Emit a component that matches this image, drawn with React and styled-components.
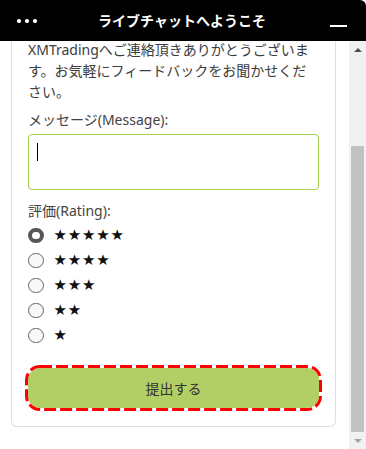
import React from "react";
import styled, { createGlobalStyle } from "styled-components";

const Global = createGlobalStyle`
  html, body { margin: 0; padding: 0; background: #fff; }
  body { font-family: "Noto Sans", "Noto Sans CJK JP", sans-serif; }
  * { box-sizing: border-box; }
`;

const Window = styled.div`
  width: 366px;
  height: 449px;
  display: flex;
  flex-direction: column;
  overflow: hidden;
  background: #fff;
`;

const Header = styled.header`
  height: 41px;
  flex: none;
  background: #000;
  border-top-right-radius: 6px;
  display: grid;
  grid-template-columns: 1fr auto 1fr;
  align-items: center;
  padding: 0 19px 0 17px;
  color: #fff;
`;

const Dots = styled.div`
  display: flex;
  gap: 4.5px;
  align-items: center;
  padding-top: 1px;
`;

const Dot = styled.span`
  width: 3.5px;
  height: 3.5px;
  border-radius: 50%;
  background: #fff;
`;

const Title = styled.h1`
  margin: 0;
  font-size: 14px;
  font-weight: 700;
  font-family: "Noto Sans CJK JP", sans-serif;
  line-height: 20px;
  margin-top: -1px;
`;

const Minimize = styled.button`
  justify-self: end;
  width: 17px;
  height: 2px;
  padding: 0;
  border: none;
  background: #fff;
  margin-top: 10px;
`;

const Body = styled.div`
  flex: 1;
  display: flex;
  min-height: 0;
`;

const Scroller = styled.div`
  flex: 1;
  overflow: hidden;
  padding: 0 13px 0 11px;
`;

const Card = styled.div`
  background: #fff;
  border: 1px solid #dedede;
  border-top: none;
  border-radius: 0 0 6px 6px;
  padding: 0 16px 18px;
  margin-top: -2px;
  color: #3c3c3c;
  font-size: 14px;
  line-height: 21px;
`;

const Intro = styled.p`
  margin: 0;
`;

const Label = styled.div`
  margin-top: ${(p) => p.$gap}px;
  color: #444;
`;

const MessageBox = styled.div`
  margin-top: 4px;
  height: 56px;
  border: 1px solid #a6ce4c;
  border-radius: 4px;
  padding: 8px 8px;
  background: #fff;
`;

const Caret = styled.span`
  display: block;
  width: 1px;
  height: 18px;
  background: #000;
`;

const RadioList = styled.div`
  margin-top: 2px;
  display: flex;
  flex-direction: column;
`;

const RadioRow = styled.label`
  height: 25px;
  display: flex;
  align-items: center;
  gap: 10px;
`;

const Radio = styled.input.attrs({ type: "radio" })`
  appearance: none;
  margin: 0;
  width: 15.5px;
  height: 15.5px;
  border-radius: 50%;
  border: ${(p) => (p.checked ? "4.5px solid #575757" : "1.5px solid #666")};
  background: ${(p) => (p.checked ? "#fff" : "#f8f8f8")};
  flex: none;
`;

const Stars = styled.span`
  font-family: "DejaVu Sans", sans-serif;
  font-size: 15px;
  letter-spacing: 0.8px;
  color: #111;
  line-height: 1;
`;

const SubmitWrap = styled.div`
  position: relative;
  margin-top: 20px;
`;

const Submit = styled.button`
  display: block;
  width: 100%;
  height: 40px;
  border: none;
  border-radius: 12px;
  background: #b1cf64;
  color: #333;
  font-family: "Noto Sans CJK JP", sans-serif;
  font-size: 14px;
  outline: none;
`;

const FocusRing = styled.svg`
  position: absolute;
  left: 0;
  top: 0;
  width: 100%;
  height: 100%;
  overflow: visible;
  pointer-events: none;
`;

const Scrollbar = styled.div`
  width: 17px;
  flex: none;
  background: #f1f1f1;
  display: flex;
  flex-direction: column;
`;

const ArrowButton = styled.div`
  height: 17px;
  flex: none;
  display: flex;
  align-items: center;
  justify-content: center;
`;

const Arrow = styled.span`
  width: 0;
  height: 0;
  border-left: 4px solid transparent;
  border-right: 4px solid transparent;
  ${(p) =>
    p.$up
      ? `border-bottom: 4px solid ${p.$color};`
      : `border-top: 4px solid ${p.$color};`}
`;

const Track = styled.div`
  flex: 1;
  display: flex;
  flex-direction: column;
  justify-content: flex-end;
  padding: 0 2px;
`;

const Thumb = styled.div`
  background: #c1c1c1;
  height: ${(p) => p.$size}px;
`;

const ratings = [5, 4, 3, 2, 1];

export default function App() {
  return (
    <Window>
      <Global />
      <Header>
        <Dots>
          <Dot />
          <Dot />
          <Dot />
        </Dots>
        <Title>ライブチャットへようこそ</Title>
        <Minimize aria-label="minimize" />
      </Header>
      <Body>
        <Scroller>
          <Card>
            <Intro>
              XMTradingへご連絡頂きありがとうございます。お気軽にフィードバックをお聞かせください。
            </Intro>
            <Label $gap={7}>メッセージ(Message):</Label>
            <MessageBox>
              <Caret />
            </MessageBox>
            <Label $gap={10}>評価(Rating):</Label>
            <RadioList>
              {ratings.map((n) => (
                <RadioRow key={n}>
                  <Radio name="rating" checked={n === 5} readOnly />
                  <Stars>{"★".repeat(n)}</Stars>
                </RadioRow>
              ))}
            </RadioList>
            <SubmitWrap>
              <Submit>提出する</Submit>
              <FocusRing aria-hidden="true">
                <rect
                  x="-1.5"
                  y="-1.5"
                  width="294"
                  height="43"
                  rx="13.5"
                  fill="none"
                  stroke="#ff0000"
                  strokeWidth="3"
                  strokeDasharray="12 4"
                />
              </FocusRing>
            </SubmitWrap>
          </Card>
        </Scroller>
        <Scrollbar>
          <ArrowButton>
            <Arrow $up $color="#505050" />
          </ArrowButton>
          <Track>
            <Thumb $size={286} />
          </Track>
          <ArrowButton>
            <Arrow $color="#a3a3a3" />
          </ArrowButton>
        </Scrollbar>
      </Body>
    </Window>
  );
}
